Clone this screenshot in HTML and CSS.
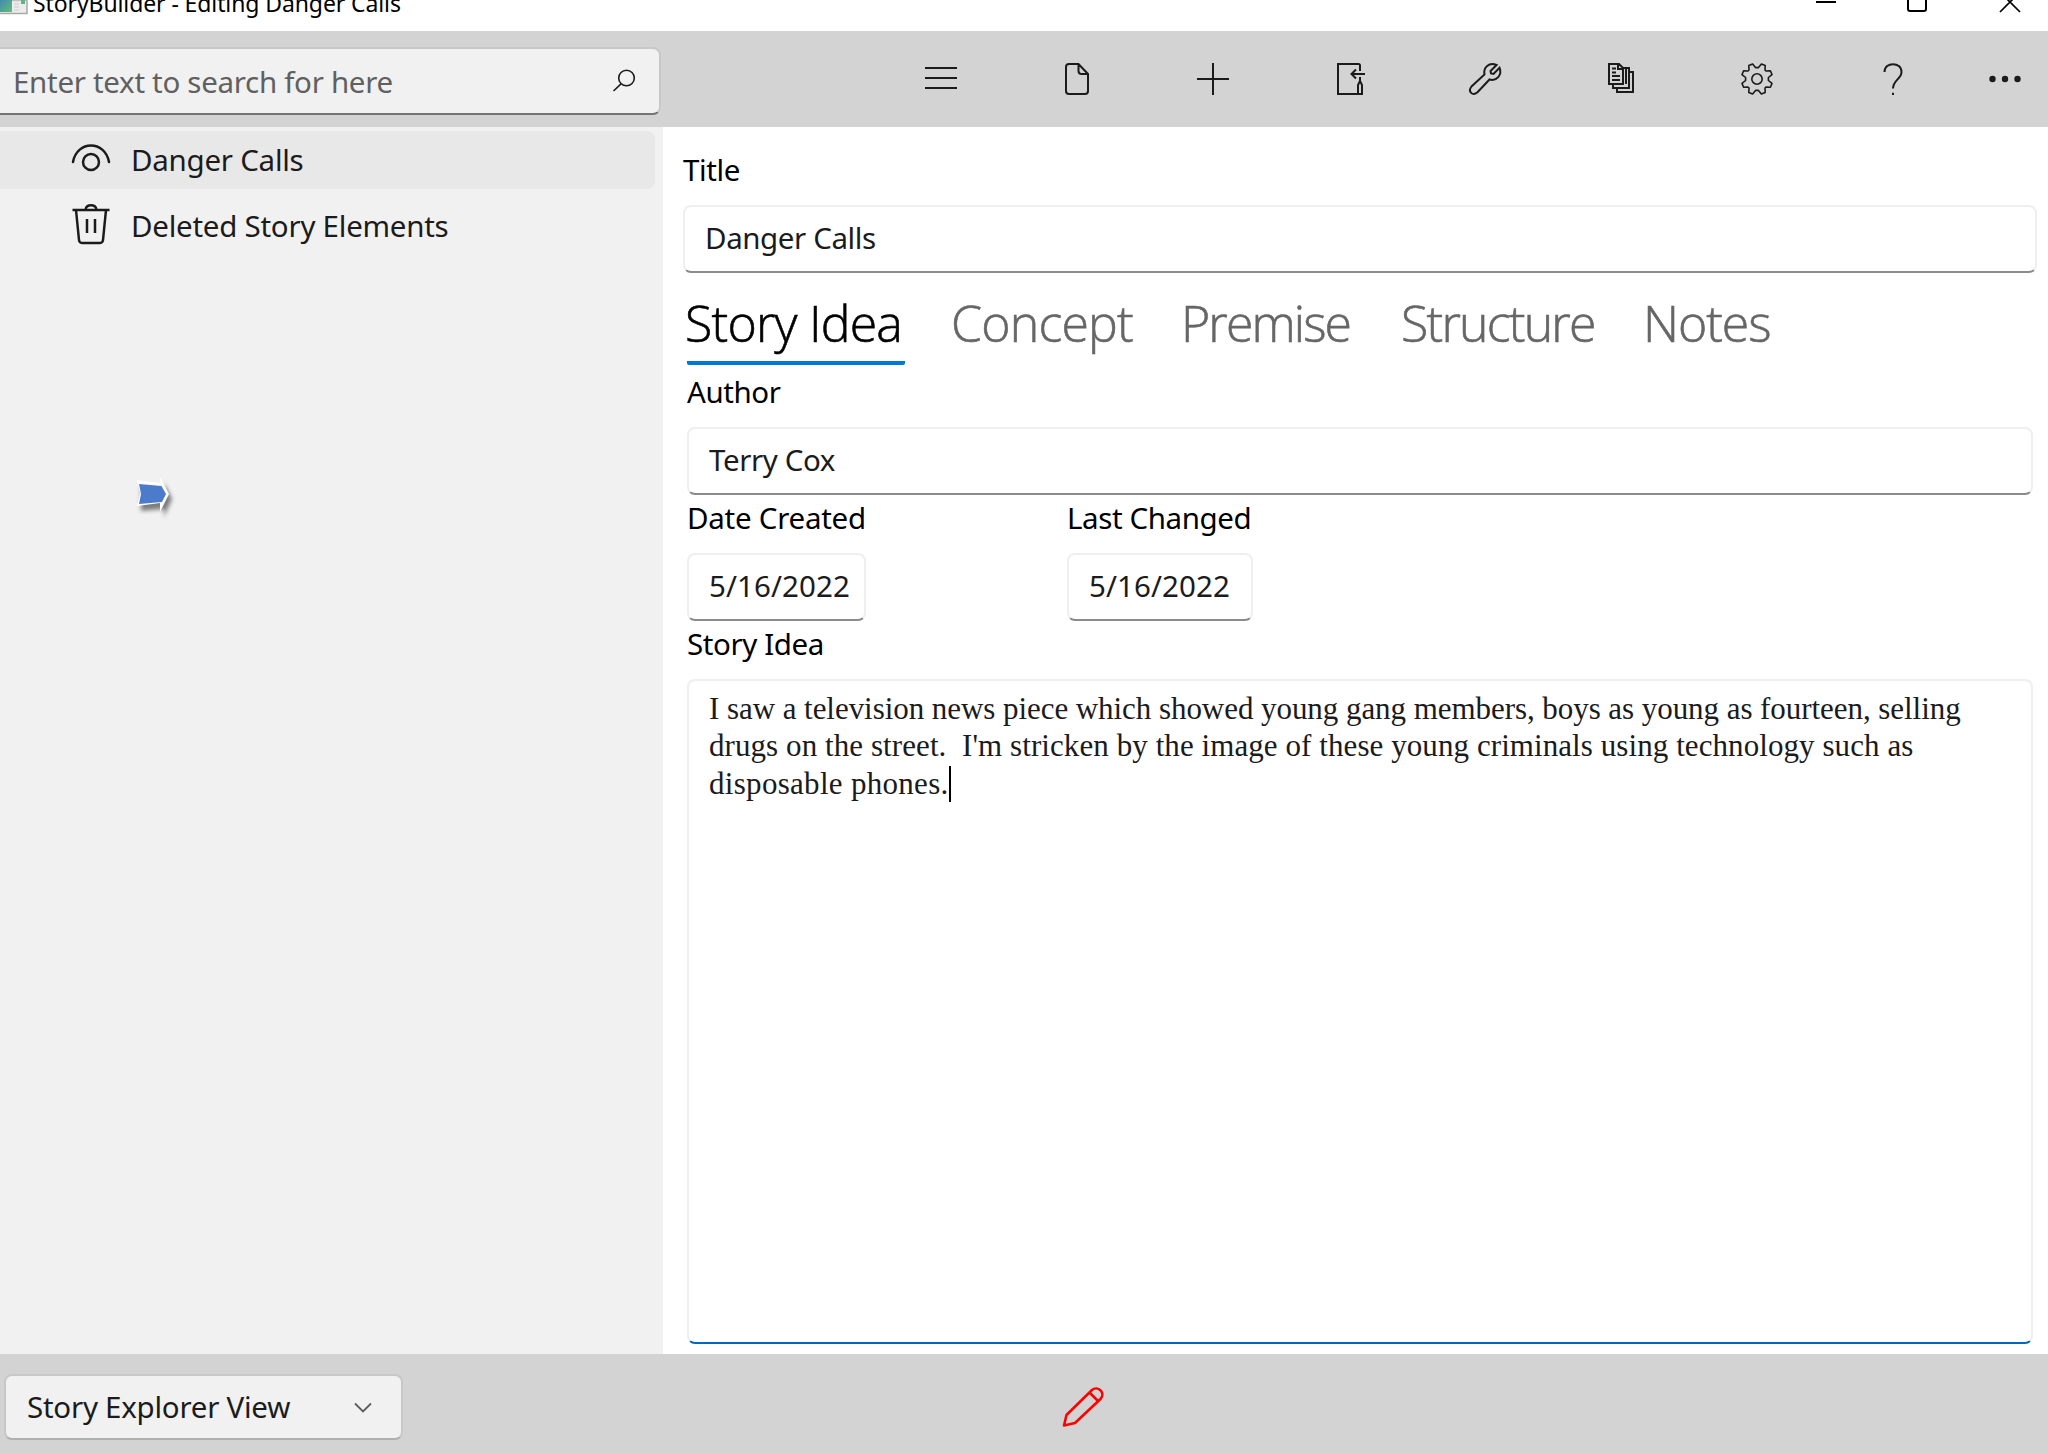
FILE: index.html
```html
<!DOCTYPE html>
<html lang="en">
<head>
<meta charset="utf-8">
<title>StoryBuilder - Editing Danger Calls</title>
<link rel="stylesheet" href="styles.css">
</head>
<body>
<div class="window">
  <header class="titlebar">
    <svg class="app-icon" width="28" height="15" viewBox="0 0 28 15">
      <defs><linearGradient id="appfill" x1="0" y1="0" x2="1" y2="1"><stop offset="0" stop-color="#3f8bb0"/><stop offset="1" stop-color="#62bd78"/></linearGradient></defs>
      <path d="M0 0H27V13.5H0" fill="#ececec" stroke="#a9a9a9" stroke-width="1.5"/>
      <rect width="12" height="12" fill="url(#appfill)"/>
      <path d="M14 1h5M14 4h5M14 7h5M14 10h5" stroke="#ccc" stroke-width="1.2"/>
      <rect x="21" width="4" height="4" fill="#62b48a"/>
    </svg>
    <span class="app-title">StoryBuilder - Editing Danger Calls</span>
    <svg class="window-controls" width="206" height="14" viewBox="0 0 206 14" fill="none" stroke="#000" stroke-width="2">
      <path d="M2 2H22"/><path d="M94 -6V9Q94 11 96 11H110Q112 11 112 9V-6"/><path d="M186 12L206 -8M206 12L186 -8" stroke-width="1.7"/>
    </svg>
  </header>

  <div class="toolbar">
    <div class="search"><span class="search-text">Enter text to search for here</span>
      <svg width="24" height="24" viewBox="0 0 24 24" fill="none" stroke="#1b1b1b" stroke-width="1.6"><circle cx="14.5" cy="9" r="7.8"/><path d="M9 14.8L1.5 22"/></svg>
    </div>
    <nav class="commands">
      <span class="command"><svg class="icon" viewBox="0 0 32 32"><path d="M0 5H32M0 15H32M0 25H32"/></svg></span>
      <span class="command"><svg class="icon" viewBox="0 0 32 32"><path d="M17.5 1H8Q5 1 5 4V28Q5 31 8 31H24Q27 31 27 28V11ZM17.5 1V8Q17.5 11 20.5 11H27"/></svg></span>
      <span class="command"><svg class="icon" viewBox="0 0 32 32"><path d="M0 16H32M16 0V32"/></svg></span>
      <span class="command"><svg class="icon" viewBox="0 0 32 32"><path d="M27 8V2.5Q27 1 25.5 1H5V31H29V22L27 18L25 22V31M27 14V19M32 11H19M23 6.5L18.5 11L23 15.5"/></svg></span>
      <span class="command"><svg class="icon" viewBox="0 0 32 32"><path d="M15.5 11.5C14 4.500 20 -1 27.500 2L21.500 8L22 10.500L24.500 11L30.500 4.700C33.500 12 27.500 18.500 20.500 16.500L8.500 29.300C3.500 33.500 -1.500 28.500 2.500 23.500Z"/></svg></span>
      <span class="command"><svg class="icon" viewBox="0 0 32 32"><path d="M4 1H14L18 5V21H4ZM13 1V6H18M18 5H24V25H8V21M24 9H28V29H12V25M7 5.500H11M7 9.500H11M7 13H15M7 17H15M18 5H21V21"/></svg></span>
      <span class="command"><svg class="icon" viewBox="0 0 32 32"><path d="M11.600 1L14.500 4.600H17.500L20.400 1L24.200 2.600L24 7L25 8L29.400 7.800L31 11.600L27.400 14.500V17.500L31 20.400L29.400 24.200L25 24L24 25L24.200 29.400L20.400 31L17.500 27.400H14.500L11.600 31L7.800 29.400L8 25L7 24L2.600 24.200L1 20.400L4.600 17.500V14.500L1 11.600L2.600 7.800L7 8L8 7L7.800 2.600Z" stroke-width="1.6" stroke-linejoin="round"/><circle cx="16" cy="16" r="5.200" stroke-width="1.6"/></svg></span>
      <span class="command"><svg class="icon" viewBox="0 0 32 32"><path d="M7.500 9C7.500 -1.500 24.500 -1.500 24.500 9C24.500 16 16 17 16 25.500M16 29.800V32"/></svg></span>
      <span class="command more"><svg class="icon" viewBox="0 0 32 32"><g fill="#1b1b1b" stroke="none"><circle cx="3.500" cy="16" r="3.200"/><circle cx="16" cy="16" r="3.200"/><circle cx="28.500" cy="16" r="3.200"/></g></svg></span>
    </nav>
  </div>

  <main class="workspace">
    <aside class="explorer">
      <div class="node selected">
        <svg width="40" height="46" viewBox="0 0 40 46" fill="none" stroke="#1b1b1b" stroke-width="2.500" stroke-linecap="round"><path d="M2 25C6 3 34 3 38 25"/><circle cx="20" cy="25" r="8"/></svg>
        <span class="node-name">Danger Calls</span>
      </div>
      <div class="node">
        <svg width="40" height="46" viewBox="0 0 40 46" fill="none" stroke="#1b1b1b" stroke-width="2.500"><path d="M1.500 7H38.500M5 7L8 37Q8.300 40 11 40H29Q31.700 40 32 37L35 7M14.500 7C14.500 0.500 25.500 0.500 25.500 7M16 16V30M24 16V30"/></svg>
        <span class="node-name">Deleted Story Elements</span>
      </div>
      <svg class="pointer" width="50" height="50" viewBox="0 0 50 50">
        <defs><filter id="soft" x="-30%" y="-30%" width="160%" height="160%"><feGaussianBlur stdDeviation="2.200"/></filter></defs>
        <path d="M8 10L31 12V6L39 22L31 40V32L8 34Z" fill="#555" opacity=".75" filter="url(#soft)" transform="translate(3 4)"/>
        <path d="M7 7L30 10V4L39 21L30 39V30L7 33L10 20Z" fill="#fff"/>
        <path d="M9 11L31.500 13L36 21L32 29L9 31L11 21Z" fill="#4d7bcc"/>
      </svg>
    </aside>

    <section class="editor">
      <div class="label title-label">Title</div>
      <div class="field title-field">Danger Calls</div>
      <div class="tabs">
        <span class="tab active">Story Idea</span><span class="tab concept">Concept</span><span class="tab premise">Premise</span><span class="tab structure">Structure</span><span class="tab notes">Notes</span>
      </div>
      <div class="pane">
        <div class="label">Author</div>
        <div class="field">Terry Cox</div>
        <div class="dates">
          <div class="date created"><div class="label">Date Created</div><div class="field">5/16/2022</div></div>
          <div class="date changed"><div class="label">Last Changed</div><div class="field">5/16/2022</div></div>
        </div>
        <div class="label">Story Idea</div>
        <div class="story">
          <span class="line one">I saw a television news piece which showed young gang members, boys as young as fourteen, selling</span>
          <span class="line two">drugs on the street.&nbsp; I'm stricken by the image of these young criminals using technology such as</span>
          <span class="line three">disposable phones.<i class="caret"></i></span>
        </div>
      </div>
    </section>
  </main>

  <footer class="statusbar">
    <div class="view-select"><span class="view-name">Story Explorer View</span>
      <svg width="18" height="11" viewBox="0 0 18 11" fill="none" stroke="#5d5d5d" stroke-width="1.800"><path d="M1 1.500L9 9.500L17 1.500"/></svg>
    </div>
    <svg class="pencil" width="42" height="42" viewBox="0 0 42 42" fill="none" stroke="#f00" stroke-width="2.600" stroke-linejoin="round"><path d="M2 39.500L4.500 29L30 4C36 -1 44 7 38.500 13L13 37ZM27.500 6.500L36 15"/></svg>
  </footer>
</div>
</body>
</html>
```
FILE: styles.css
```css
* { box-sizing: border-box; }
body { margin: 0; background: #fff; font-family: "Noto Sans", "Open Sans", sans-serif; font-size: 29.5px; letter-spacing: -0.4px; color: #1b1b1b; }
svg { display: block; flex: none; overflow: visible; }
.window { width: 2048px; height: 1453px; display: flex; flex-direction: column; overflow: hidden; white-space: nowrap; }

.titlebar { height: 31px; flex: none; display: flex; align-items: flex-start; overflow: hidden; color: #000; }
.app-title { font-size: 23px; letter-spacing: -0.1px; line-height: 30px; margin: -12px 0 0 5px; }
.window-controls { margin-left: auto; margin-right: 28px; }

.toolbar { height: 96px; flex: none; display: flex; background: #d3d3d3; }
.search { flex: none; width: 661px; height: 68px; margin: 16px 212px 0 0; padding: 0 23px 0 13px; display: flex; align-items: center; justify-content: space-between; background: #f1f1f1; border: 2px solid #c8c8c8; border-left: 0; border-bottom-color: #737573; border-radius: 0 8px 8px 0; color: #606060; }
.search-text { letter-spacing: -0.3px; }
.commands { display: flex; flex: none; }
.command { width: 136px; display: flex; align-items: center; justify-content: center; }
.command.more { width: 88px; }
.icon { width: 32px; height: 32px; fill: none; stroke: #1b1b1b; stroke-width: 2; }

.workspace { flex: 1; display: flex; min-height: 0; }
.explorer { width: 663px; background: #f1f1f1; padding-top: 4px; }
.node { width: 655px; height: 58px; margin-bottom: 8px; padding-left: 71px; display: flex; align-items: center; gap: 20px; border-radius: 0 8px 8px 0; }
.node.selected { background: #e8e8e8; }
.node-name { letter-spacing: -0.25px; padding-bottom: 2px; }
.pointer { margin: 218px 0 0 130px; }

.editor { flex: 1; padding: 18px 11px 10px 20px; display: flex; flex-direction: column; min-width: 0; }
.label { height: 48px; line-height: 48px; color: #000; }
.title-label { height: 60px; line-height: 50px; }
.field { height: 68px; line-height: 61px; padding: 0 20px; border: 2px solid #efefef; border-bottom-color: #8b8b8b; border-radius: 8px; }
.tabs { height: 95px; display: flex; padding-left: 4px; font-family: "Open Sans", "Noto Sans", sans-serif; font-size: 50px; font-weight: 300; letter-spacing: -1.1px; line-height: 90px; color: #666; -webkit-text-stroke: 0.6px currentColor; }
.tab { flex: none; padding-top: 5px; }
.tab.active { width: 218px; height: 92px; margin-right: 46px; border-bottom: 4px solid #0078d7; border-radius: 2px; color: #000; text-indent: -2px; letter-spacing: -0.8px; }
.concept { width: 230px; letter-spacing: -0.8px; }
.premise { width: 220px; letter-spacing: -1.9px; }
.structure { width: 242px; letter-spacing: -1.8px; }
.pane { flex: 1; display: flex; flex-direction: column; margin: 0 4px; }
.pane .label { height: 48px; margin-bottom: 11px; }
.dates { display: flex; margin: -1px 0; }
.created { width: 179px; margin-right: 201px; }
.created .label { letter-spacing: -0.25px; }
.changed { width: 186px; }
.date .field { letter-spacing: 0.1px; }
.story { flex: 1; border: 2px solid #efefef; border-bottom-color: #0067c0; border-radius: 8px; padding: 9px 20px; font-family: "Liberation Serif", serif; font-size: 31px; line-height: 37.3px; letter-spacing: 0; }
.line { display: block; }
.one { letter-spacing: -0.055px; }
.two { letter-spacing: 0.075px; }
.three { letter-spacing: 0.3px; }
.caret { display: inline-block; width: 2px; height: 36px; background: #000; vertical-align: -8px; }

.statusbar { height: 99px; flex: none; display: flex; background: #d3d3d3; }
.view-select { width: 399px; height: 66px; margin: 20px 659px 0 4px; padding: 0 29px 0 21px; display: flex; align-items: center; justify-content: space-between; border: 2px solid #c8c8c8; border-bottom-color: #b0b0b0; border-radius: 8px; background: #f1f1f1; }
.view-name { letter-spacing: -0.25px; padding-bottom: 1px; }
.pencil { margin-top: 32px; }
```
